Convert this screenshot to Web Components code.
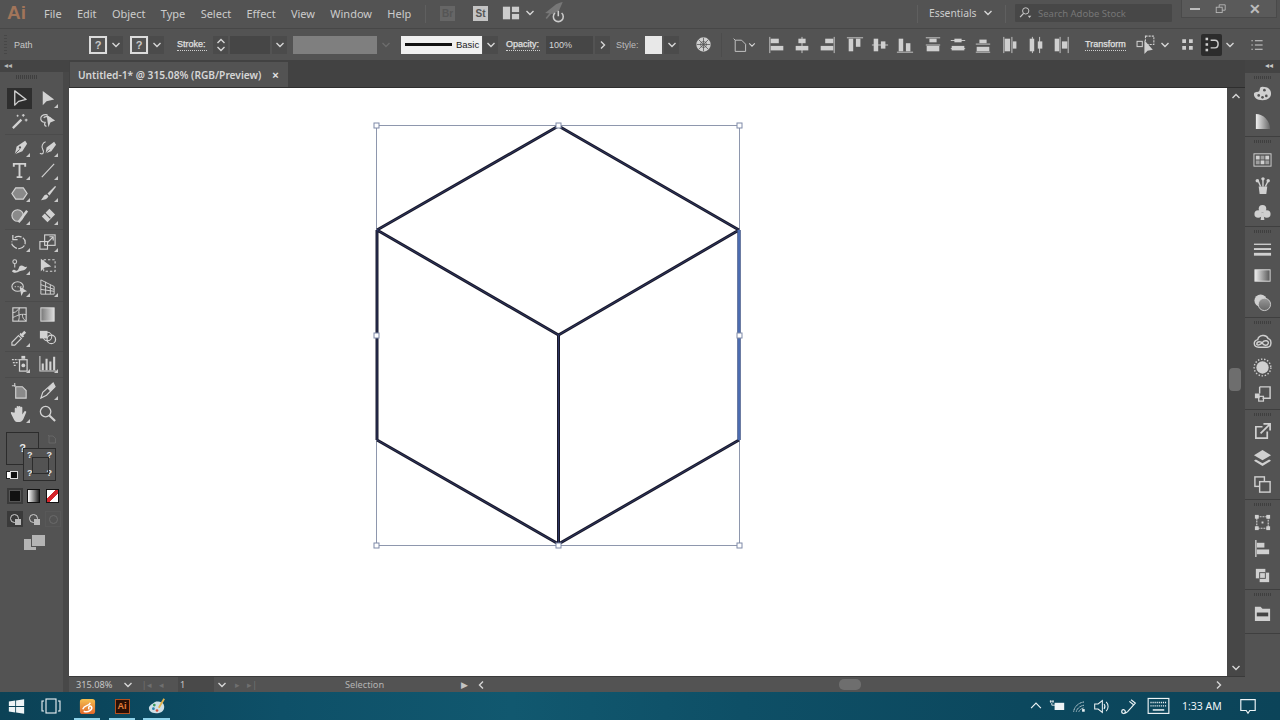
<!DOCTYPE html>
<html>
<head>
<meta charset="utf-8">
<title>Illustrator</title>
<style>
  html, body { margin: 0; height: 100%; overflow: hidden; background: #535353; }
  body { font-family: "Noto Sans", "Liberation Sans", sans-serif; font-size: 11px; color: #cfcfcf; }
</style>
</head>
<body>
<ai-app></ai-app>

<script>
const grad = (a, b, dir) => `<defs><linearGradient id="g" x1="0" y1="0" x2="${dir ? 0 : 1}" y2="${dir ? 1 : 0}"><stop offset="0" stop-color="${a}"/><stop offset="1" stop-color="${b}"/></linearGradient></defs>`
const F = 'fill="currentColor" stroke="none"'

const ICONS = {
  // tools
  selection: `<path d="M5 2v15l4-4 8-2z" stroke-width="1.400" stroke-linejoin="round"/>`,
  direct: `<path d="M5 2v15l4-4 8-2z" ${F}/>`,
  wand: `<path d="M3 17L12 8" stroke-width="2.400"/><path d="M14 2v3M12.500 3.500h3M17 7v3M15.500 8.500h3M8 3v2M7 4h2" stroke-width="1.100"/>`,
  lasso: `<path d="M10 3C5 2 2 5 3 8c1 3 4 3 5 3-2 1-1 4 1 4M6 6c2-2 6-1 8 1" stroke-width="1.300"/><path d="M9 3l9 6-5 2-2 5z" ${F}/>`,
  pen: `<path d="M16 3l2 3-5 8-8 3 2-8z" ${F}/><path d="M5 17l5-5" stroke="#535353" stroke-width="1"/><circle cx="10.500" cy="10" r="1.200" fill="#535353" stroke="none"/>`,
  curvature: `<path d="M2 16c3 2 5-1 3-4S5 5 8 4" stroke-width="1.200"/><path d="M17 4l2 3-5 7-6 2 1-6z" ${F}/><path d="M8 16l4-4" stroke="#535353"/>`,
  type: `<path d="M4 6V3h12v3M10 3v14M7 17h6" stroke-width="2"/>`,
  line: `<path d="M4 17L17 3" stroke-width="1.200"/>`,
  polygon: `<path d="M6 4h8l4 6-4 6H6l-4-6z" fill="#8a8a8a" stroke-width="1.300"/>`,
  brush: `<path d="M18 2L10 10l2 2 7-9z" ${F}/><path d="M9 11c-3 0-3 3-6 6 4 0 7-1 8-4z" ${F}/>`,
  shaper: `<circle cx="8" cy="10" r="6" fill="#8a8a8a" stroke-width="1.200"/><path d="M9 17L18 5" stroke-width="2.600"/>`,
  eraser: `<path d="M12 3l6 6-8 8-6-6z" ${F}/><path d="M7 7l6 6" stroke="#535353" stroke-width="1.200"/>`,
  rotate: `<path d="M5 5c4-3 11-1 11 5s-7 8-11 5-3-4-3-6" stroke-width="1.300" stroke-dasharray="6 0 1.500 1.500"/><path d="M3 2v5h5" stroke-width="1.300"/>`,
  scale: `<rect x="7" y="2" width="11" height="11" stroke-width="1.200"/><rect x="2" y="9" width="8" height="8" stroke-width="1.200"/><path d="M10 10l6-6M12 4h4v4" stroke-width="1.200"/>`,
  warp: `<path d="M2 16c3-4 4 1 6-1s1-5 4-5 3 3 6 1c-1 5-6 4-8 5s-5 3-8 0z" ${F}/><circle cx="5" cy="6" r="2" stroke-width="1.100"/><path d="M5 8v4" stroke-width="1.100"/>`,
  freetransform: `<path d="M3 3v13l4-4 7-1z" ${F}/><rect x="6" y="4" width="12" height="12" stroke-width="1.100" stroke-dasharray="2.500 2"/>`,
  shapebuilder: `<ellipse cx="8" cy="9" rx="6" ry="5" stroke-width="1.200"/><path d="M5 9h1M8 9h1M11 9h1" stroke-width="1.300"/><path d="M10 9l8 5-4 1-2 4z" ${F}/>`,
  perspective: `<path d="M3 2l14 7v8H3zM3 7l14 5M3 12l14 2M8 4v13M13 7v10" stroke-width="1"/>`,
  mesh: `<rect x="3" y="3" width="14" height="14" stroke-width="1.200"/><path d="M3 8c4 0 5-3 7-5M3 13c4-1 6-4 14-3M10 3c-2 5 1 9-1 14M13 10c0 3 1 5 4 7" stroke-width="1"/>`,
  gradient: `${grad('#777', '#ddd')}<rect x="3" y="3" width="14" height="14" fill="url(#g)" stroke="#ddd" stroke-width="1"/>`,
  eyedropper: `<path d="M15 3l2 2-3 3 1 1-2 1-3-3 1-2 1 1z" ${F}/><path d="M9 8l3 3-7 7-3 0 0-3z" stroke-width="1.200"/>`,
  blend: `<rect x="2" y="3" width="8" height="8" ${F}/><circle cx="10" cy="9" r="4.500" stroke-width="1.100"/><circle cx="14" cy="12" r="4.500" stroke-width="1.300"/>`,
  spray: `<path d="M2 6h2M5 6h2M8 6h1M3 9h2M6 9h2M4 12h2" stroke-width="1.400"/><rect x="10" y="6" width="8" height="12" stroke-width="1.300"/><circle cx="14" cy="12" r="2" ${F}/><rect x="12" y="2" width="4" height="3" ${F}/>`,
  graph: `<path d="M2 2v16h17" stroke-width="1.100"/><path d="M5 17v-7M9 17V5M13 17V8M17 17V3" stroke-width="2.200"/>`,
  artboard: `<path d="M5 2v4M2 5h4" stroke-width="1.100"/><path d="M6 6h7l4 4v8H6z" fill="#8a8a8a" stroke-width="1.200"/>`,
  slice: `<path d="M16 2l2 4-9 9-6 3 2-6z" stroke-width="1.200"/><path d="M16 2l2 4-5 5-3-3z" ${F}/>`,
  hand: `<path d="M5 9V5a1 1 0 0 1 2 0v3-5a1 1 0 0 1 2 0v5-5a1 1 0 0 1 2 0v5-4a1 1 0 0 1 2 0v7l2-3a1 1 0 0 1 2 1l-3 7c-1 2-3 3-5 3-3 0-4-1-5-3L1 10a1 1 0 0 1 2-1z" ${F}/>`,
  zoom: `<circle cx="8" cy="8" r="5.500" stroke-width="1.400"/><path d="M12 12l6 6" stroke-width="2.200"/>`,
  // control bar
  globe: `<circle cx="10" cy="10" r="8.500" ${F}/><g stroke="#535353" stroke-width=".9"><path d="M10 2v16M2 10h16M4 4l12 12M16 4L4 16"/><circle cx="10" cy="10" r="3.500"/></g>`,
  abicon: `<path d="M2 2l2 2M4 4h8l5 5v9H4z" stroke-width="1.100"/>`,
  al: `<path d="M2 1v18" stroke-width="1"/><rect x="3" y="3" width="9" height="5" ${F}/><rect x="3" y="11" width="14" height="5" ${F}/>`,
  ac: `<path d="M10 1v18" stroke-width="1"/><rect x="6" y="3" width="8" height="5" ${F}/><rect x="3" y="11" width="14" height="5" ${F}/>`,
  ar: `<path d="M18 1v18" stroke-width="1"/><rect x="8" y="3" width="9" height="5" ${F}/><rect x="3" y="11" width="14" height="5" ${F}/>`,
  at: `<path d="M1 2h18" stroke-width="1"/><rect x="3" y="3" width="5" height="14" ${F}/><rect x="11" y="3" width="5" height="9" ${F}/>`,
  am: `<path d="M1 10h18" stroke-width="1"/><rect x="3" y="3" width="5" height="14" ${F}/><rect x="11" y="6" width="5" height="8" ${F}/>`,
  ab: `<path d="M1 18h18" stroke-width="1"/><rect x="3" y="3" width="5" height="14" ${F}/><rect x="11" y="8" width="5" height="9" ${F}/>`,
  dt: `<path d="M2 2h16M2 10h16" stroke-width="1"/><rect x="6" y="3" width="8" height="4" ${F}/><rect x="3" y="11" width="14" height="6" ${F}/>`,
  dm: `<path d="M2 5h16M2 14h16" stroke-width="1"/><rect x="6" y="3" width="8" height="4" ${F}/><rect x="3" y="11" width="14" height="5" ${F}/>`,
  db: `<path d="M2 9h16M2 18h16" stroke-width="1"/><rect x="6" y="4" width="8" height="4" ${F}/><rect x="3" y="12" width="14" height="5" ${F}/>`,
  dh1: `<path d="M2 1v18M11 1v18" stroke-width="1"/><rect x="3" y="3" width="6" height="14" ${F}/><rect x="12" y="6" width="4" height="8" ${F}/>`,
  dh2: `<path d="M6 1v18M14 1v18" stroke-width="1"/><rect x="3" y="3" width="5" height="14" ${F}/><rect x="12" y="6" width="5" height="8" ${F}/>`,
  dh3: `<path d="M9 1v18M18 1v18" stroke-width="1"/><rect x="3" y="3" width="5" height="14" ${F}/><rect x="11" y="6" width="6" height="8" ${F}/>`,
  isolate: `<rect x="1" y="7" width="5" height="5" stroke-width="1"/><rect x="9" y="2" width="8" height="8" stroke-width="1" stroke-dasharray="2 1"/><path d="M8 6v13l3-3 5-1z" ${F}/>`,
  snap: `<rect x="3" y="3" width="5" height="5" ${F}/><rect x="12" y="3" width="5" height="5" ${F}/><rect x="3" y="12" width="5" height="5" ${F}/><rect x="12" y="12" width="5" height="5" ${F}/>`,
  wrap: `<rect x="3" y="2" width="3" height="3" ${F}/><rect x="3" y="8.500" width="3" height="3" ${F}/><rect x="3" y="15" width="3" height="3" ${F}/><path d="M9 5h5c5 0 5 9 0 9H9" stroke-width="1.700"/>`,
  list: `<path d="M7 4h11M7 10h11M7 16h11" stroke-width="1.600"/><path d="M2 4h2M2 10h2M2 16h2" stroke-width="1.600"/>`,
  layout: `<rect x="1" y="3" width="8" height="14" ${F}/><rect x="11" y="3" width="8" height="6" ${F}/><rect x="11" y="11" width="8" height="6" ${F}/>`,
  launch: `<path d="M1 10L11 2c2-1 5-2 6-2l-3 7-5 4z" fill="#777" stroke="none"/><path d="M2 15l5-6" stroke="#777" stroke-width="1.500"/><path d="M10 10a4.500 4.500 0 1 0 6 0M13 8v5" stroke-width="1.400"/>`,
  search: `<circle cx="11" cy="7" r="4.500" stroke-width="1.400"/><path d="M8 10.500L3 16" stroke-width="1.800"/><path d="M14 14h5l-2.500 3z" ${F}/>`,
  restore: `<rect x="2" y="7" width="10" height="9" stroke-width="1.400"/><path d="M7 7V3h10v9h-5" stroke-width="1.400"/>`,
  // dock
  palette: `<path d="M10 3c6 0 9 3 9 7s-3 7-9 7-9-3-9-6 3-2 5-3 0-5 4-5z" ${F}/><circle cx="6" cy="12" r="1.400" fill="#535353" stroke="none"/><circle cx="10" cy="14" r="1.400" fill="#535353" stroke="none"/><circle cx="14" cy="12.500" r="1.400" fill="#535353" stroke="none"/><circle cx="12" cy="6.500" r="1.400" fill="#535353" stroke="none"/>`,
  quadrant: `${grad('#f0f0f0', '#666')}<path d="M3 2c8 0 15 7 15 16H3z" fill="url(#g)" stroke="none"/>`,
  swatches: `<rect x="1" y="4" width="18" height="13" fill="none" stroke-width="1"/><g ${F}><rect x="3" y="6" width="4" height="4"/><rect x="8" y="6" width="4" height="4" opacity=".6"/><rect x="13" y="6" width="4" height="4"/><rect x="3" y="11" width="4" height="4" opacity=".6"/><rect x="8" y="11" width="4" height="4"/><rect x="13" y="11" width="4" height="4" opacity=".6"/></g>`,
  brushes: `<path d="M6 11h9l-1 8H7z" ${F}/><path d="M8 11L5 4M10.500 11V2M13 11l3-6" stroke-width="1.500"/><circle cx="4.500" cy="5" r="1.800" ${F}/><circle cx="16" cy="5" r="1.800" ${F}/><circle cx="10.500" cy="3" r="1.800" ${F}/>`,
  club: `<circle cx="10" cy="6" r="4" ${F}/><circle cx="5.500" cy="11.500" r="4" ${F}/><circle cx="14.500" cy="11.500" r="4" ${F}/><path d="M9 10h2l1 8H8z" ${F}/>`,
  strokes: `<path d="M1 4.500h18" stroke-width="1.400"/><path d="M1 9.500h18" stroke-width="2"/><path d="M1 15h18" stroke-width="3"/>`,
  gradbox: `${grad('#eee', '#555')}<rect x="2" y="4" width="16" height="12" fill="url(#g)" stroke="#ddd" stroke-width="1"/>`,
  transparency: `${grad('#999', '#666', 1)}<circle cx="8" cy="8" r="6.500" ${F}/><circle cx="12" cy="12" r="6.500" fill="url(#g)" stroke="#ccc" stroke-width="1"/>`,
  cc: `<path d="M6 16c-6 0-6-7-1-8 1-5 9-6 11-1 4 1 4 9-1 9zM4 13c0-4 5-3 6-1s5 3 6 0-4-4-6-1-6 3-6 2z" stroke-width="1.500"/>`,
  appearance: `<circle cx="10" cy="10" r="6.500" ${F}/><circle cx="10" cy="10" r="8.800" stroke-width="1.500" stroke-dasharray="1.500 1.800"/>`,
  gstyles: `<path d="M7 3h11v12H10" stroke-width="1.500"/><path d="M7 3v7" stroke-width="1.500"/><rect x="2" y="10" width="5" height="5" ${F}/><rect x="6" y="13" width="5" height="5" stroke-width="1.300"/>`,
  exporticon: `<path d="M15 10v7H3V5h7" stroke-width="1.800"/><path d="M8 12l9-9M11 2h7v7" stroke-width="1.800"/>`,
  layers: `<path d="M10 2l9 5.500-9 5.500-9-5.500z" ${F}/><path d="M3 12l7 4 7-4 2 1.500L10 19l-9-5.500z" ${F}/>`,
  artboards: `<rect x="2" y="2" width="10" height="10" stroke-width="1.500"/><rect x="7" y="7" width="11" height="11" fill="#535353" stroke-width="1.500"/>`,
  transform: `<rect x="4" y="4" width="12" height="12" stroke-width="1.200" stroke-dasharray="2 1"/><g ${F}><rect x="2" y="2" width="4" height="4"/><rect x="14" y="2" width="4" height="4"/><rect x="2" y="14" width="4" height="4"/><rect x="14" y="14" width="4" height="4"/><rect x="9" y="9" width="2" height="2"/></g>`,
  alignpanel: `<path d="M3 1v18" stroke-width="1.400"/><rect x="4" y="4" width="8" height="5" ${F}/><rect x="4" y="11" width="13" height="5" ${F}/>`,
  pathfinder: `<rect x="3" y="3" width="10" height="10" ${F}/><rect x="7" y="7" width="10" height="10" ${F}/><rect x="7" y="7" width="6" height="6" stroke="#535353" stroke-width="1"/>`,
  links: `<path d="M2 3h6l2 2h8v13H2z" ${F}/><rect x="4" y="9" width="12" height="4" fill="#444" stroke="none"/>`,
  // taskbar
  win: `<path d="M1 4l7.500-1v6.500H1zM9.500 3L19 1.500v8H9.500zM1 10.500h7.500V17L1 16zM9.500 10.500H19v8L9.500 17z" ${F}/>`,
  taskview: `<rect x="5" y="3" width="10" height="14" stroke-width="1.100"/><path d="M3 5H1v10h2M17 5h2v10h-2" stroke-width="1.100"/>`,
  uc: `${grad('#f6c04f', '#e0662a', 1)}<rect x="2" y="2" width="16" height="16" rx="3" fill="url(#g)" stroke="none"/><path d="M5 13c2-6 6-2 8-7M6 15c5 2 10-2 8-5-2-2-4 2-2 3" stroke="#fff" stroke-width="1.500"/>`,
  tpalette: `<path d="M9 5c6 0 9 2 9 6s-3 7-9 7-8-3-8-6 8-7 8-7z" fill="#cfe0e6" stroke="none"/><circle cx="6" cy="13" r="1.500" fill="#2a7fb0" stroke="none"/><circle cx="10" cy="15" r="1.500" fill="#d8503a" stroke="none"/><circle cx="7" cy="9" r="1.500" fill="#3a9a5a" stroke="none"/><path d="M12 12l6-10" stroke="#e2b24b" stroke-width="2"/>`,
  chevup: `<path d="M3 13l7-7 7 7" stroke-width="1.700"/>`,
  battery: `<path d="M1 4h5M2 3v3M5 3v3M3.500 6v3h4" stroke-width="1.100"/><rect x="7" y="6" width="12" height="9" ${F}/>`,
  wifi: `<path d="M1 18C2 10 9 4 17 3M5 18c1-5 6-9 12-10M9 18c1-3 4-5 8-6" stroke-width="1.200" stroke-dasharray="1.800 .6"/><rect x="14" y="14" width="4" height="4" ${F}/>`,
  volume: `<path d="M2 7h4l5-4v14l-5-4H2z" stroke-width="1.200"/><path d="M13 7c1.500 2 1.500 4 0 6M15.500 4.500c3 3 3 8 0 11" stroke-width="1.200"/>`,
  penink: `<path d="M13 2l5 4-9 10c-3 3-7 3-7 0s3-3 4-1-1 4-2 3" stroke-width="1.400"/><path d="M11 4l5 4" stroke-width="1.400"/>`,
  keyboard: `<rect x="1" y="3" width="18" height="13" stroke-width="1"/><path d="M3 6.500h14M3 9.500h14" stroke-width="1.200" stroke-dasharray="1 .8"/><path d="M5 13h10" stroke-width="1.300"/>`,
  notify: `<path d="M2 3h16v12h-6l-2 3-2-3H2z" stroke-width="1.300"/>`
}

// one drawn icon, picked by its name attribute
class AiIcon extends HTMLElement {
  connectedCallback() {
    const size = this.getAttribute('size') || 18
    this.attachShadow({ mode: 'open' })
    this.shadowRoot.innerHTML = `
      <style>
        :host { display: inline-flex; align-items: center; justify-content: center; flex: none; color: inherit; }
        svg { display: block; }
      </style>
      <svg width="${size}" height="${size}" viewBox="0 0 20 20" fill="none" stroke="currentColor">${ICONS[this.getAttribute('name')] || ''}</svg>`
  }
}
customElements.define('ai-icon', AiIcon)

// small chevron, on a darker segment when "box" is set
class AiDrop extends HTMLElement {
  connectedCallback() {
    const dir = this.getAttribute('dir') || 'down'
    const d = { down: 'M1.500 3L5 6.500 8.500 3', right: 'M3 1.500L6.500 5 3 8.500', left: 'M7 1.500L3.500 5 7 8.500', up: 'M1.500 7L5 3.500 8.500 7' }[dir]
    this.attachShadow({ mode: 'open' })
    this.shadowRoot.innerHTML = `
      <style>
        :host { display: inline-flex; align-items: center; justify-content: center; flex: none; width: 15px; height: 18px; color: #d6d6d6; }
        :host([box]) { background: #4b4b4b; }
        :host([dim]) { color: #6c6c6c; }
        svg { display: block; }
      </style>
      <svg width="10" height="10" viewBox="0 0 10 10" fill="none" stroke="currentColor" stroke-width="1.400"><path d="${d}"/></svg>`
  }
}
customElements.define('ai-drop', AiDrop)

class AiMenubar extends HTMLElement {
  constructor() {
    super()
    this.attachShadow({ mode: 'open' })
    const menus = ['File', 'Edit', 'Object', 'Type', 'Select', 'Effect', 'View', 'Window', 'Help']
    this.shadowRoot.innerHTML = `
      <style>
        :host { display: flex; align-items: center; height: 28px; background: #535353; font-size: 11px; color: #cccccc; flex: none; }
        .logo { margin: -2px 0 0 7px; width: 37px; font: bold 19px "Liberation Sans", sans-serif; color: #a2755a; }
        .menus { display: flex; gap: 15.300px; width: 381px; margin-top: -2px; font-size: 11px; }
        .sep { width: 1px; height: 18px; background: #5f5f5f; flex: none; }
        .tile { width: 15px; height: 15px; display: flex; align-items: center; justify-content: center; font: bold 10px "Liberation Sans", sans-serif; margin-top: -2px; }
        .br { margin-left: 14px; background: #666; color: #555; }
        .st { margin-left: 18px; background: #c4c4c4; color: #555; }
        .spacer { flex: 1; }
        .essentials { margin: -2px 0 0 11px; width: 51px; color: #cccccc; font-size: 10.300px; }
        .search { margin: -2px 0 0 9px; width: 157px; height: 18px; background: #474747; display: flex; align-items: center; color: #767676; font-size: 9.500px; gap: 6px; border-radius: 1px; }
        .search ai-icon { margin-left: 3px; color: #c8c8c8; }
        .win { display: flex; align-self: flex-start; margin: 0 4px 0 10px; height: 17px; background: #5a5a5a; box-shadow: 0 0 0 1px #4a4a4a; color: #bcbcbc; }
        .win > div { display: flex; align-items: center; justify-content: center; height: 17px; }
        .min { width: 26px; } .res { width: 25px; } .cls { width: 43px; font-size: 14px; font-family: "Liberation Sans", sans-serif; font-weight: bold; }
        .min i { display: block; width: 10px; height: 2px; background: #bcbcbc; }
      </style>
      <div class="logo">Ai</div>
      <div class="menus">${menus.map(m => `<span>${m}</span>`).join('')}</div>
      <div class="sep"></div>
      <div class="tile br">Br</div>
      <div class="tile st">St</div>
      <ai-icon name="layout" size="18" style="margin:-2px 0 0 14px"></ai-icon>
      <ai-drop style="margin:-2px 0 0 2px"></ai-drop>
      <ai-icon name="launch" size="22" style="margin:-2px 0 0 7px"></ai-icon>
      <div class="spacer"></div>
      <div class="sep"></div>
      <div class="essentials">Essentials</div>
      <ai-drop style="margin-top:-2px"></ai-drop>
      <div class="sep" style="margin-left:10px"></div>
      <div class="search"><ai-icon name="search" size="14"></ai-icon><span>Search Adobe Stock</span></div>
      <div class="win">
        <div class="min"><i></i></div>
        <div class="res"><ai-icon name="restore" size="12"></ai-icon></div>
        <div class="cls">✕</div>
      </div>`
  }
}
customElements.define('ai-menubar', AiMenubar)

class AiControlbar extends HTMLElement {
  constructor() {
    super()
    this.attachShadow({ mode: 'open' })
    const ic = (n, ml) => `<ai-icon name="${n}" size="18"${ml ? ` style="margin-left:${ml}px"` : ''}></ai-icon>`
    const trio = (a, b, c, ml) => ic(a, ml) + ic(b, 7) + ic(c, 7)
    this.shadowRoot.innerHTML = `
      <style>
        :host { display: flex; align-items: center; height: 32px; background: #535353; border-top: 1px solid #474747; box-sizing: border-box; font: 9px "Liberation Sans", sans-serif; color: #cfcfcf; flex: none; }
        .grip { margin-left: 4px; width: 3px; height: 20px; background: repeating-linear-gradient(#474747 0 1px, transparent 1px 3px); flex: none; }
        .path { margin-left: 7px; width: 75px; color: #c8c8c8; flex: none; }
        .q { width: 14px; height: 14px; border: 2px solid #dcdcdc; display: flex; align-items: center; justify-content: center; font: bold 11px "Liberation Sans", sans-serif; color: #c8c8c8; flex: none; }
        .lbl { flex: none; border-bottom: 1px dotted #cfcfcf; line-height: 12px; -webkit-text-stroke: .25px #e0e0e0; color: #e0e0e0; white-space: nowrap; }
        .plain { flex: none; color: #bdbdbd; }
        .field { height: 18px; background: #464646; flex: none; display: flex; align-items: center; box-sizing: border-box; padding-left: 3px; color: #d6d6d6; }
        .spin { width: 15px; height: 18px; background: #4b4b4b; display: flex; flex-direction: column; align-items: center; justify-content: center; flex: none; }
        .spin ai-drop { height: 8px; }
        .gray { width: 84px; height: 18px; background: #7f7f7f; flex: none; }
        .basic { width: 81px; height: 18px; background: #f0f0f0; flex: none; display: flex; align-items: center; color: #222; box-sizing: border-box; padding-left: 4px; gap: 4px; font-size: 9.500px; }
        .basic i { display: block; width: 47px; height: 2.500px; background: #111; }
        .swatch { width: 17px; height: 18px; background: #e8e8e8; flex: none; }
        .v { width: 1px; height: 24px; background: #4c4c4c; flex: none; }
        .dark { width: 21px; height: 22px; background: #2c2c2c; display: flex; align-items: center; justify-content: center; flex: none; border-radius: 2px; }
      </style>
      <div class="grip"></div>
      <div class="path">Path</div>
      <div class="q">?</div>
      <ai-drop box style="margin-left:1px"></ai-drop>
      <div class="q" style="margin-left:7px">?</div>
      <ai-drop box style="margin-left:1px"></ai-drop>
      <div class="lbl" style="margin-left:13px;width:30px">Stroke:</div>
      <div class="spin" style="margin-left:6px"><ai-drop dir="up"></ai-drop><ai-drop></ai-drop></div>
      <div class="field" style="margin-left:2px;width:40px"></div>
      <ai-drop box style="margin-left:2px"></ai-drop>
      <div class="gray" style="margin-left:6px"></div>
      <ai-drop dim style="margin-left:1px"></ai-drop>
      <div class="basic" style="margin-left:8px"><i></i><span>Basic</span></div>
      <ai-drop box style="margin-left:1px"></ai-drop>
      <div class="lbl" style="margin-left:8px;width:34px">Opacity:</div>
      <div class="field" style="margin-left:6px;width:47px">100%</div>
      <ai-drop box dir="right" style="margin-left:2px"></ai-drop>
      <div class="plain" style="margin-left:6px;width:23px">Style:</div>
      <div class="swatch" style="margin-left:6px"></div>
      <ai-drop box style="margin-left:2px"></ai-drop>
      <ai-icon name="globe" size="17" style="margin-left:16px"></ai-icon>
      <div class="v" style="margin-left:9px"></div>
      <ai-icon name="abicon" size="16" style="margin-left:10px"></ai-icon>
      <ai-drop style="width:8px"></ai-drop>
      ${trio('al', 'ac', 'ar', 12)}
      ${trio('at', 'am', 'ab', 10)}
      ${trio('dt', 'dm', 'db', 10)}
      ${trio('dh1', 'dh2', 'dh3', 10)}
      <div class="lbl" style="margin-left:15px;width:41px">Transform</div>
      <ai-icon name="isolate" size="21" style="margin-left:10px"></ai-icon>
      <ai-drop></ai-drop>
      <ai-icon name="snap" size="15" style="margin-left:8px"></ai-icon>
      <div class="dark" style="margin-left:6px"><ai-icon name="wrap" size="17"></ai-icon></div>
      <ai-drop></ai-drop>
      <ai-icon name="list" size="14" style="margin-left:13px"></ai-icon>`
  }
}
customElements.define('ai-controlbar', AiControlbar)

class AiTool extends HTMLElement {
  connectedCallback() {
    this.attachShadow({ mode: 'open' })
    this.shadowRoot.innerHTML = `
      <style>
        :host { display: flex; align-items: center; justify-content: center; position: relative; height: 22.700px; color: #d2d2d2; }
        :host([active]) .box { background: #2e2e2e; }
        .box { width: 25px; height: 21px; display: flex; align-items: center; justify-content: center; }
        :host([more])::after { content: ""; position: absolute; right: 3px; bottom: 2px; border: 2px solid transparent; border-right-color: #c8c8c8; border-bottom-color: #c8c8c8; }
      </style>
      <div class="box"><ai-icon name="${this.getAttribute('name')}" size="19"></ai-icon></div>`
  }
}
customElements.define('ai-tool', AiTool)

class AiToolbox extends HTMLElement {
  constructor() {
    super()
    this.attachShadow({ mode: 'open' })
    const groups = [
      [['selection', 'active'], ['direct', 'more'], ['wand'], ['lasso']],
      [['pen', 'more'], ['curvature', 'more'], ['type', 'more'], ['line', 'more'], ['polygon', 'more'], ['brush', 'more'], ['shaper', 'more'], ['eraser', 'more']],
      [['rotate', 'more'], ['scale', 'more'], ['warp', 'more'], ['freetransform'], ['shapebuilder', 'more'], ['perspective', 'more']],
      [['mesh'], ['gradient'], ['eyedropper', 'more'], ['blend']],
      [['spray', 'more'], ['graph', 'more']],
      [['artboard'], ['slice', 'more'], ['hand', 'more'], ['zoom']]
    ]
    const tools = groups.map((g, i) => `<div class="group${i ? '' : ' first'}">${g.map(t => `<ai-tool name="${t[0]}" ${t[1] || ''}></ai-tool>`).join('')}</div>`).join('')
    this.shadowRoot.innerHTML = `
      <style>
        :host { display: flex; flex-direction: column; width: 69px; background: #484848; flex: none; }
        .head { height: 12px; background: #444; color: #b8b8b8; font: 8px "Liberation Sans", sans-serif; padding-left: 4px; line-height: 12px; }
        .panel { width: 63px; flex: 1; background: #535353; box-sizing: border-box; padding-left: 5px; }
        .grip { width: 22px; height: 4px; margin: 3px 0 0 11px; background: repeating-linear-gradient(90deg, #3f3f3f 0 1px, transparent 1px 2px); }
        .group { display: grid; grid-template-columns: 28px 28px; border-top: 1px solid #4b4b4b; margin-top: 2px; padding-top: 1px; }
        .group.first { border-top: 0; margin-top: 8px; padding-top: 0; }
        .colors { position: relative; height: 132px; margin: -4px 0 0 -5px; }
        .colors > * { position: absolute; box-sizing: border-box; }
        .fillbox { left: 6px; top: 11px; width: 33px; height: 33px; border: 1px solid #2c2c2c; color: #e8e8e8; font: bold 11px "Liberation Sans", sans-serif; display: flex; align-items: center; justify-content: center; }
        .strokebox { left: 23px; top: 27px; width: 33px; height: 33px; border: 1px solid #2c2c2c; background: #535353; color: #e8e8e8; font: bold 9px/9px "Liberation Sans", sans-serif; }
        .strokebox .in { position: absolute; left: 8px; top: 8px; width: 15px; height: 15px; border: 1px solid #2c2c2c; }
        .strokebox b { position: absolute; }
        .def1 { left: 10px; top: 50px; width: 8px; height: 8px; background: #111; border: 1px solid #ddd; }
        .def2 { left: 6px; top: 50px; width: 8px; height: 8px; background: #fff; border: 1px solid #222; }
        .swap { left: 47px; top: 13px; color: #757575; }
        .m1 { left: 7px; top: 67px; width: 16px; height: 16px; background: #3a3a3a; display: flex; align-items: center; justify-content: center; }
        .m1 i { display: block; width: 10px; height: 10px; background: #111; border: 1px solid #555; }
        .m2 { left: 27px; top: 68px; width: 13px; height: 14px; background: linear-gradient(90deg, #fff, #222); border: 1px solid #111; }
        .m3 { left: 46px; top: 68px; width: 13px; height: 14px; border: 1px solid #111; background: linear-gradient(135deg, #fff 0 36%, #d4242a 36% 64%, #fff 64%); }
        .d1 { left: 7px; top: 90px; width: 16px; height: 16px; background: #3a3a3a; }
        .d1 i, .d2 i, .d3 i { position: absolute; width: 7px; height: 7px; border-radius: 50%; left: 3px; top: 3px; border: 1.500px solid #cfcfcf; }
        .d1 u, .d2 u { position: absolute; width: 6px; height: 6px; left: 8px; top: 8px; background: #bbb; }
        .d2 { left: 26px; top: 90px; width: 16px; height: 16px; }
        .d3 { left: 45px; top: 90px; width: 16px; height: 16px; box-shadow: inset 0 0 0 1px #585858; }
        .d3 i { border-color: #6a6a6a; left: 4px; top: 4px; }
        .screen { left: 23px; top: 113px; width: 22px; height: 16px; }
        .screen i { position: absolute; display: block; background: #b4b4b4; border: 1px solid #535353; }
      </style>
      <div class="head">◂◂</div>
      <div class="panel">
        <div class="grip"></div>
        ${tools}
        <div class="colors">
          <div class="fillbox">?</div>
          <div class="strokebox"><b style="left:3px;top:2px">?</b><b style="right:3px;top:2px">?</b><b style="left:3px;bottom:2px">?</b><b style="right:3px;bottom:2px">?</b><div class="in"></div></div>
          <div class="def2"></div><div class="def1"></div>
          <ai-icon class="swap" name="abicon" size="10"></ai-icon>
          <div class="m1"><i></i></div><div class="m2"></div><div class="m3"></div>
          <div class="d1"><i></i><u></u></div><div class="d2"><i></i><u></u></div><div class="d3"><i></i></div>
          <div class="screen"><i style="left:0;top:4px;width:12px;height:11px"></i><i style="left:8px;top:0;width:13px;height:11px"></i></div>
        </div>
      </div>`
  }
}
customElements.define('ai-toolbox', AiToolbox)

class AiTabbar extends HTMLElement {
  constructor() {
    super()
    this.attachShadow({ mode: 'open' })
    this.shadowRoot.innerHTML = `
      <style>
        :host { display: flex; height: 28px; background: #424242; flex: none; align-items: flex-end; border-bottom: 1px solid #2e2e2e; box-sizing: border-box; }
        .tab { margin-left: 1px; width: 218px; height: 25px; background: #535353; display: flex; align-items: center; padding-left: 8px; box-sizing: border-box; font-size: 10.200px; font-weight: 600; color: #d6d6d6; white-space: nowrap; }
        .x { margin-left: 11px; font: bold 11px "Liberation Sans", sans-serif; color: #e6e6e6; }
      </style>
      <div class="tab"><span>Untitled-1* @ 315.08% (RGB/Preview)</span><span class="x">×</span></div>`
  }
}
customElements.define('ai-tabbar', AiTabbar)

class AiArtboard extends HTMLElement {
  constructor() {
    super()
    this.attachShadow({ mode: 'open' })
    // coordinates are relative to the white canvas, which starts at 69,88
    const handles = [[307.5, 37.5], [489.5, 37.5], [670.5, 37.5], [307.5, 247.5], [670.5, 247.5], [307.5, 457.5], [489.5, 457.5], [670.5, 457.5]]
    const cube = 'M489.500 38L670 142M670 142V352M670 352L489.500 456M489.500 456L308 352M308 352V142M308 142L489.500 38M308 142L489.500 247M489.500 247L670 142M489.500 247V456'
    this.shadowRoot.innerHTML = `
      <style>
        :host { display: block; flex: 1; background: #fff; min-width: 0; }
        svg { display: block; }
      </style>
      <svg width="1158" height="588" viewBox="0 0 1158 588">
        <rect x="307.500" y="37.500" width="363" height="420" fill="none" stroke="#8e97ad" stroke-width="1"/>
        <path d="${cube}" fill="none" stroke="#1a1a2a" stroke-width="3"/>
        <path d="${cube}" fill="none" stroke="#3f4f96" stroke-width=".5"/>
        <path d="M670 142V352" fill="none" stroke="#4c6cb0" stroke-width="3"/>
        ${handles.map(h => `<rect x="${h[0] - 2.5}" y="${h[1] - 2.5}" width="5" height="5" fill="#fff" stroke="#7f8aa8" stroke-width="1"/>`).join('')}
      </svg>`
  }
}
customElements.define('ai-artboard', AiArtboard)

class AiScrollbar extends HTMLElement {
  constructor() {
    super()
    this.attachShadow({ mode: 'open' })
    this.shadowRoot.innerHTML = `
      <style>
        :host { display: flex; flex-direction: column; align-items: center; width: 18px; background: #474747; flex: none; justify-content: space-between; padding: 2px 0; box-sizing: border-box; color: #8c8c8c; }
        .track { flex: 1; width: 100%; padding-top: 266px; box-sizing: border-box; }
        .thumb { width: 12px; height: 23px; margin-left: 2px; background: #6e6e6e; border-radius: 4px; }
      </style>
      <ai-drop dir="up" style="height:12px"></ai-drop>
      <div class="track"><div class="thumb"></div></div>
      <ai-drop style="height:12px"></ai-drop>`
  }
}
customElements.define('ai-scrollbar', AiScrollbar)

class AiStatusbar extends HTMLElement {
  constructor() {
    super()
    this.attachShadow({ mode: 'open' })
    this.shadowRoot.innerHTML = `
      <style>
        :host { display: flex; align-items: center; height: 16px; background: #535353; flex: none; font-size: 9.200px; color: #c4c4c4; box-sizing: border-box; border-top: 1px solid #3a3a3a; }
        span { flex: none; }
        .z { margin-left: 7px; width: 44px; }
        .nav { margin-left: 8px; width: 35px; color: #6f6f6f; font: 9px "Liberation Sans", sans-serif; letter-spacing: 2px; }
        .num { width: 36px; padding-left: 2px; background: #494949; align-self: stretch; line-height: 15px; box-sizing: border-box; }
        .nav2 { margin-left: 6px; width: 110px; color: #6f6f6f; font: 9px "Liberation Sans", sans-serif; letter-spacing: 2px; }
        .sel { width: 116px; color: #b4b4b4; }
        .tri { color: #c4c4c4; font: 9px "Liberation Sans", sans-serif; }
        .scroll { flex: 1; position: relative; height: 100%; display: flex; align-items: center; justify-content: space-between; padding-right: 21px; box-sizing: border-box; color: #909090; }
        .thumb { position: absolute; left: 363px; top: 2px; width: 22px; height: 11px; background: #6e6e6e; border-radius: 5px; }
      </style>
      <span class="z">315.08%</span>
      <ai-drop style="height:14px"></ai-drop>
      <span class="nav">|◂ ◂</span>
      <span class="num">1</span>
      <ai-drop style="height:14px"></ai-drop>
      <span class="nav2">▸ ▸|</span>
      <span class="sel">Selection</span>
      <span class="tri">▶</span>
      <div class="scroll" style="margin-left:8px">
        <ai-drop dir="left" style="height:14px;width:10px"></ai-drop>
        <div class="thumb"></div>
        <ai-drop dir="right" style="height:14px;width:10px"></ai-drop>
      </div>`
  }
}
customElements.define('ai-statusbar', AiStatusbar)

class AiDock extends HTMLElement {
  constructor() {
    super()
    this.attachShadow({ mode: 'open' })
    const groups = [
      { h: 64, pad: 4.5, gap: 9, icons: ['palette', 'quadrant'] },
      { h: 90, pad: 6.5, gap: 7.5, icons: ['swatches', 'brushes', 'club'] },
      { h: 91, pad: 6.5, gap: 7.5, icons: ['strokes', 'gradbox', 'transparency'] },
      { h: 92, pad: 7.5, gap: 7, icons: ['cc', 'appearance', 'gstyles'] },
      { h: 90, pad: 5.5, gap: 7.5, icons: ['exporticon', 'layers', 'artboards'] },
      { h: 90, pad: 6.5, gap: 7.5, icons: ['transform', 'alignpanel', 'pathfinder'] },
      { h: 44, pad: 7.5, gap: 0, icons: ['links'] }
    ]
    this.shadowRoot.innerHTML = `
      <style>
        :host { display: flex; flex-direction: column; width: 35px; background: #4a4a4a; flex: none; }
        .head { height: 13px; text-align: right; padding-right: 7px; color: #c8c8c8; font: 8px/12px "Liberation Sans", sans-serif; background: #444; }
        .g { background: #535353; border-bottom: 1px solid #3f3f3f; box-sizing: border-box; display: flex; flex-direction: column; align-items: center; color: #d0d0d0; }
        .grip { width: 18px; height: 3px; margin-top: 3px; background: repeating-linear-gradient(90deg, #3f3f3f 0 1px, transparent 1px 2px); flex: none; }
        .icons { display: flex; flex-direction: column; align-items: center; width: 100%; }
        .rest { flex: 1; background: #535353; }
      </style>
      <div class="head">◂◂</div>
      ${groups.map(g => `<div class="g" style="height:${g.h}px"><div class="grip"></div><div class="icons" style="padding-top:${g.pad}px;gap:${g.gap}px">${g.icons.map(n => `<ai-icon name="${n}" size="19"></ai-icon>`).join('')}</div></div>`).join('')}
      <div class="rest"></div>`
  }
}
customElements.define('ai-dock', AiDock)

class WinTaskbar extends HTMLElement {
  constructor() {
    super()
    this.attachShadow({ mode: 'open' })
    this.shadowRoot.innerHTML = `
      <style>
        :host { display: flex; align-items: center; height: 28px; flex: none; color: #eef4f6; font-family: "Noto Sans", "Liberation Sans", sans-serif; font-size: 10.500px;
          background: linear-gradient(90deg, #0c4256 0, #0b465c 8%, #0e5068 22%, #11586f 40%, #0e4f66 58%, #0c485e 80%, #0c4459 100%); }
        .slot { display: flex; align-items: center; justify-content: center; height: 100%; position: relative; flex: none; }
        .on::after { content: ""; position: absolute; left: 0; right: 0; bottom: 0; height: 2px; background: #8fd3ea; }
        .ai { width: 15px; height: 15px; background: #2b0f05; box-shadow: inset 0 0 0 1px #b4501e; color: #e8803a; display: flex; align-items: center; justify-content: center; font: bold 9px "Liberation Sans", sans-serif; }
        .spacer { flex: 1; }
        .clock { margin-left: 12px; width: 44px; white-space: nowrap; }
      </style>
      <div class="slot" style="width:33px"><ai-icon name="win" size="17"></ai-icon></div>
      <div class="slot" style="width:36px"><ai-icon name="taskview" size="20"></ai-icon></div>
      <div class="slot on" style="width:26px;margin-left:5px"><ai-icon name="uc" size="19"></ai-icon></div>
      <div class="slot on" style="width:26px;margin-left:9px"><div class="ai">Ai</div></div>
      <div class="slot on" style="width:27px;margin-left:8px"><ai-icon name="tpalette" size="18"></ai-icon></div>
      <div class="spacer"></div>
      <ai-icon name="chevup" size="14"></ai-icon>
      <ai-icon name="battery" size="16" style="margin-left:6px"></ai-icon>
      <ai-icon name="wifi" size="13" style="margin-left:8px"></ai-icon>
      <ai-icon name="volume" size="17" style="margin-left:7px"></ai-icon>
      <ai-icon name="penink" size="17" style="margin-left:10px"></ai-icon>
      <ai-icon name="keyboard" size="23" style="margin-left:10px"></ai-icon>
      <div class="clock">1:33 AM</div>
      <ai-icon name="notify" size="18" style="margin-left:13px"></ai-icon>
      <div style="width:23px"></div>`
  }
}
customElements.define('win-taskbar', WinTaskbar)

class AiApp extends HTMLElement {
  constructor() {
    super()
    this.attachShadow({ mode: 'open' })
    this.shadowRoot.innerHTML = `
      <style>
        :host { display: flex; flex-direction: column; width: 1280px; height: 720px; overflow: hidden; }
        .body { display: flex; height: 632px; flex: none; }
        .center { display: flex; flex-direction: column; flex: 1; min-width: 0; }
        .work { display: flex; flex: 1; min-height: 0; }
      </style>
      <ai-menubar></ai-menubar>
      <ai-controlbar></ai-controlbar>
      <div class="body">
        <ai-toolbox></ai-toolbox>
        <div class="center">
          <ai-tabbar></ai-tabbar>
          <div class="work"><ai-artboard></ai-artboard><ai-scrollbar></ai-scrollbar></div>
          <ai-statusbar></ai-statusbar>
        </div>
        <ai-dock></ai-dock>
      </div>
      <win-taskbar></win-taskbar>`
  }
}
customElements.define('ai-app', AiApp)
</script>
</body>
</html>
